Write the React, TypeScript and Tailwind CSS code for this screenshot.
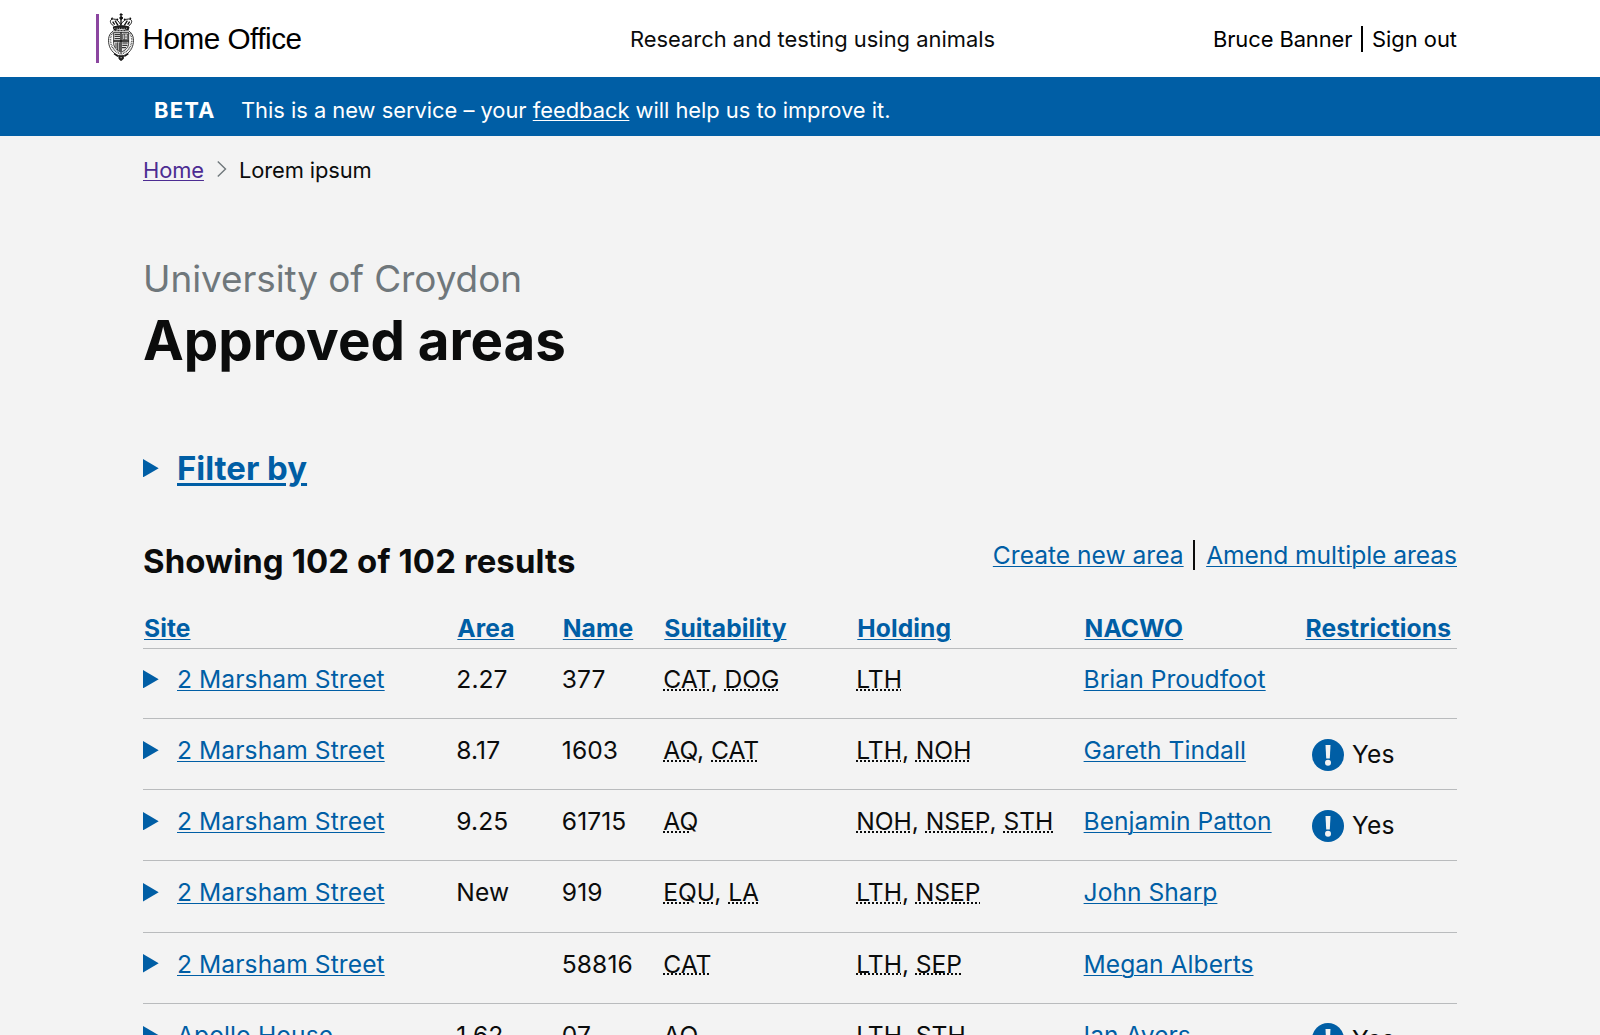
import React from 'react';

type Row = {
  site: string;
  area: string;
  name: string;
  suitability: string[];
  holding: string[];
  nacwo: string;
  restricted?: boolean;
};

const rows: Row[] = [
  { site: '2 Marsham Street', area: '2.27', name: '377', suitability: ['CAT', 'DOG'], holding: ['LTH'], nacwo: 'Brian Proudfoot' },
  { site: '2 Marsham Street', area: '8.17', name: '1603', suitability: ['AQ', 'CAT'], holding: ['LTH', 'NOH'], nacwo: 'Gareth Tindall', restricted: true },
  { site: '2 Marsham Street', area: '9.25', name: '61715', suitability: ['AQ'], holding: ['NOH', 'NSEP', 'STH'], nacwo: 'Benjamin Patton', restricted: true },
  { site: '2 Marsham Street', area: 'New', name: '919', suitability: ['EQU', 'LA'], holding: ['LTH', 'NSEP'], nacwo: 'John Sharp' },
  { site: '2 Marsham Street', area: '', name: '58816', suitability: ['CAT'], holding: ['LTH', 'SEP'], nacwo: 'Megan Alberts' },
  { site: 'Apollo House', area: '1.62', name: '07', suitability: ['AQ'], holding: ['LTH', 'STH'], nacwo: 'Ian Ayers', restricted: true },
];

const headings = ['Site', 'Area', 'Name', 'Suitability', 'Holding', 'NACWO', 'Restrictions'];

const columns = 'grid grid-cols-[313.3px_105.5px_101.5px_193px_227.3px_222px_151px] border-b border-[#b9bbbd] whitespace-nowrap';
const link = 'underline decoration-[1.4px] underline-offset-[2px] text-[#005ea5]';

function Crest() {
  return (
    <svg className="h-12 w-[26px] shrink-0" viewBox="84 40 78 144" fill="none" stroke="#111" strokeWidth="3">
      {/* crown */}
      <path d="M123 41v10M119 45h9" strokeWidth="4" />
      <circle cx="123.500" cy="55" r="4" fill="#111" />
      <path d="M101 79C88 70 88 59 100 58c11 0 15 6 22 17 8-11 13-17 24-17 12 1 12 12 0 21" />
      <path d="M98 66l6 9M105 63l9 14M149 66l-6 9M142 63l-9 14M123 58v20" strokeWidth="4" />
      <path d="M94 58l4-4M153 58l-4-4M110 57l4 4M136 57l-4 4" strokeWidth="4" />
      <path d="M100 82c14-5 34-5 47 0l-2 8c-14-4-29-4-43 0z" fill="#222" />
      <path d="M103 86h42" stroke="#ddd" strokeWidth="2" strokeDasharray="3 4" />
      <path d="M103 93h40" strokeWidth="3" strokeDasharray="7 2" />
      {/* garter */}
      <path d="M101 93C87 101 83 117 87 135c4 17 17 31 36 35 20-4 32-18 36-35 4-18 0-34-14-42" strokeWidth="2.500" />
      <path d="M98 99c-7 10-8 22-5 33 4 15 14 26 30 31 17-5 27-16 31-31 3-11 2-23-6-33" stroke="#444" strokeWidth="5" strokeDasharray="2.500 2.500" />
      {/* quartered shield */}
      <path d="M101 98h45v33c0 12-10 21-23 27-12-6-22-15-22-27z" fill="#e6e6e6" strokeWidth="2.500" />
      <path d="M123 98v58M101 124h45" strokeWidth="4" />
      <path d="M104 104h16M104 110h16M104 117h16M127 130h16M127 137h15M126 144h12" strokeWidth="3" />
      <path d="M128 103h15v17h-15zM133 103v17M138 108v8" strokeWidth="2" />
      <path d="M108 129v16M113 128v23M118 128v26" strokeWidth="2.500" />
      {/* buckle and pendant */}
      <path d="M102 162l12 8M145 162l-12 8" strokeWidth="4" />
      <path d="M116 168h15l-1 10-7 5-6-5z" fill="#222" strokeWidth="2" />
      <path d="M121 174h5" stroke="#ddd" strokeWidth="2" />
    </svg>
  );
}

function Triangle() {
  return (
    <svg className="h-[18.4px] w-4 shrink-0" viewBox="0 0 16 18.400" preserveAspectRatio="none">
      <path d="M0 0l15.700 9.200L0 18.400z" fill="#005ea5" />
    </svg>
  );
}

function Warning() {
  return (
    <svg className="mt-px h-8 w-8" viewBox="0 0 32 32">
      <circle cx="16" cy="16" r="16" fill="#005ea5" />
      <path d="M13.500 6h5l-.7 13.500h-3.600z" fill="#f3f3f3" />
      <circle cx="16" cy="23.800" r="3" fill="#f3f3f3" />
    </svg>
  );
}

function Abbreviations({ items }: { items: string[] }) {
  return (
    <span className="tracking-[-0.03px]">
      {items.map((item, i) => (
        <React.Fragment key={item}>
          {i > 0 && ', '}
          <abbr className="underline decoration-dotted decoration-2 underline-offset-[1px]">{item}</abbr>
        </React.Fragment>
      ))}
    </span>
  );
}

export default function App() {
  return (
    <div className="h-[1035px] w-[1600px] overflow-hidden bg-[#f3f3f3] font-[Inter,sans-serif] text-[#0b0c0c]">
      <header className="flex h-[77px] items-center bg-white pr-[143px] pl-24 text-[21.9px]">
        <div className="flex w-[534px] items-center">
          <div className="h-[49px] w-[2.6px] bg-[#8b46a0]" />
          <div className="-mt-[3px] ml-[9px] flex items-center gap-[9px]">
            <Crest />
            <span className="mt-1 font-['Liberation_Sans',sans-serif] text-[29.7px] tracking-[-0.5px] text-black">Home Office</span>
          </div>
        </div>
        <span className="mt-px">Research and testing using animals</span>
        <div className="mt-px ml-auto flex items-center gap-[9px] text-black">
          <span className="tracking-[-0.08px]">Bruce Banner</span>
          <span className="h-[26px] w-[1.5px] bg-black" />
          <span>Sign out</span>
        </div>
      </header>

      <div className="flex h-[59px] bg-[#005ea5] pt-[18px] pl-[154px] text-[21.9px] leading-[30px] text-white">
        <strong className="w-[87px] font-bold tracking-[1.2px]">BETA</strong>
        <p className="tracking-[-0.02px]">
          This is a new service – your <a className="underline decoration-[1.4px] underline-offset-[2px]">feedback</a> will help us to improve it.
        </p>
      </div>

      <main className="px-[143px]">
        <nav className="mt-[19px] flex text-[21.9px] leading-[30px] tracking-[-0.1px]">
          <a className="text-[#4c2c92] underline decoration-[1.4px] underline-offset-[2px]">Home</a>
          <svg className="mt-[6px] ml-[13px] h-4 w-[10px]" viewBox="0 0 10 16" fill="none" stroke="#6f777b" strokeWidth="1.400">
            <path d="M.8.600L8.500 8 .8 15.400" />
          </svg>
          <span className="ml-[12px]">Lorem ipsum</span>
        </nav>

        <p className="mt-[71px] text-[36.9px] leading-[46px] tracking-[-0.06px] text-[#6f777b]">University of Croydon</p>
        <h1 className="mt-[4px] text-[54.7px] leading-[68px] font-bold tracking-[-0.03px]">Approved areas</h1>

        <div className="mt-[73px] flex items-center text-[32.9px] leading-[42px]">
          <Triangle />
          <a className="ml-[18px] font-bold text-[#005ea5] underline decoration-[2.6px] underline-offset-[3px]">Filter by</a>
        </div>

        <div className="mt-[49px] flex h-[44px] items-start justify-between">
          <h2 className="mt-[2px] text-[32.9px] leading-[42px] font-bold tracking-[0.13px]">Showing 102 of 102 results</h2>
          <div className="flex text-[24.6px] leading-[34px]">
            <a className={link}>Create new area</a>
            <span className="mt-[2px] mr-[11px] ml-[9.5px] h-[30px] w-[2px] bg-[#0b0c0c]" />
            <a className={`${link} tracking-[-0.06px]`}>Amend multiple areas</a>
          </div>
        </div>

        <div className="mt-[28px] text-[24.6px] leading-[34px] tracking-[0.08px]">
          <div className={`${columns} h-[39px] pt-px pl-px font-bold *:last:-ml-px`}>
            {headings.map((heading) => (
              <div key={heading}>
                <a className={link}>{heading}</a>
              </div>
            ))}
          </div>
          {rows.map((row, i) => (
            <div key={i} className={`${columns} ${i === 0 ? 'h-[70px] pt-[13px]' : 'h-[71.2px] pt-[14px]'}`}>
              <div className="flex h-[34px] items-center">
                <Triangle />
                <a className={`${link} ml-[18px]`}>{row.site}</a>
              </div>
              <span>{row.area}</span>
              <span>{row.name}</span>
              <Abbreviations items={row.suitability} />
              <Abbreviations items={row.holding} />
              <span><a className={`${link} tracking-[0.02px]`}>{row.nacwo}</a></span>
              {row.restricted && (
                <div className="mt-1 ml-[6px] flex h-[34px] items-center gap-[8.5px]">
                  <Warning />
                  <span>Yes</span>
                </div>
              )}
            </div>
          ))}
        </div>
      </main>
    </div>
  );
}
